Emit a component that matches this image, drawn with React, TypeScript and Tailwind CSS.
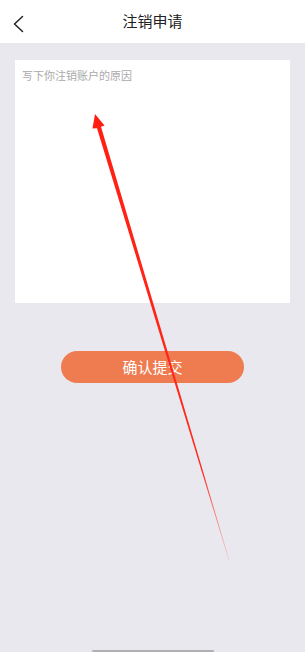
const font = { fontFamily: '"Noto Sans CJK SC", "Noto Sans", sans-serif' };

function Arrow() {
  return (
    <svg className="pointer-events-none absolute inset-0" width="305" height="652" viewBox="0 0 305 652">
      <defs>
        <linearGradient id="fade" x1="95" y1="114" x2="229" y2="560" gradientUnits="userSpaceOnUse">
          <stop offset="0" stopColor="#ff1f12" />
          <stop offset="0.8" stopColor="#ff2a1c" />
          <stop offset="1" stopColor="#ff6a60" stopOpacity="0.3" />
        </linearGradient>
      </defs>
      <polygon
        points="95,114 104.5,125.5 101,126.8 229.3,560 228.7,560 97,128.2 92.5,128.5"
        fill="url(#fade)"
      />
    </svg>
  );
}

export default function App() {
  return (
    <div className="relative flex h-[652px] w-[305px] flex-col overflow-hidden bg-[#e9e8ee]" style={font}>
      <header className="relative flex h-[43px] shrink-0 items-center justify-center bg-white">
        <button className="absolute left-[10px] top-[14px] text-[#222]" aria-label="back">
          <svg width="16" height="20" viewBox="0 0 16 20" fill="none" stroke="currentColor" strokeWidth="1.5" strokeLinecap="round" strokeLinejoin="round">
            <polyline points="12.5,2.5 4.5,10 12.5,17.5" />
          </svg>
        </button>
        <h1 className="text-[15px] text-[#222]">注销申请</h1>
      </header>

      <div className="px-[15px] pt-[17px]">
        <textarea
          className="block h-[243px] w-full resize-none bg-white px-[7px] py-[7px] text-[11px] leading-[16px] text-[#333] placeholder:text-[#a9a9a9] outline-none"
          placeholder="写下你注销账户的原因"
        />
      </div>

      <div className="flex justify-center pt-[48px]">
        <button className="h-[32px] w-[183px] rounded-full bg-[#ef7c50] text-[15px] text-white">确认提交</button>
      </div>

      <div className="mt-auto flex justify-center">
        <div className="h-[2px] w-[122px] rounded-full bg-[#b0afb4]" />
      </div>

      <Arrow />
    </div>
  );
}
